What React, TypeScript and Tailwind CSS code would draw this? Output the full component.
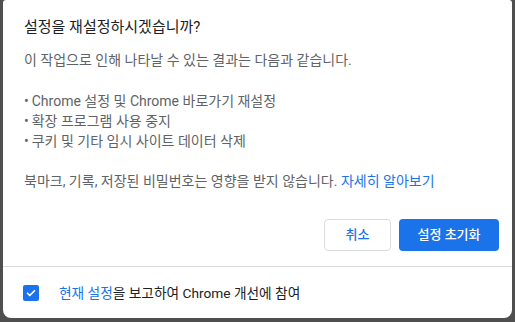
const effects = [
  'Chrome 설정 및 Chrome 바로가기 재설정',
  '확장 프로그램 사용 중지',
  '쿠키 및 기타 임시 사이트 데이터 삭제',
]

export default function App() {
  return (
    <div
      className="w-[515px] h-[322px] bg-[#4f4f4f] pl-[3px] pr-[3px] overflow-hidden"
      style={{ fontFamily: 'Roboto, "Noto Sans CJK KR", "Noto Sans", sans-serif' }}
    >
      <div className="h-[318px] bg-white rounded-t-[3px] rounded-b-lg flex flex-col">
        <div className="pl-[21px] pr-[13px] pt-[15px] flex flex-col">
          <h1 className="text-[15px] leading-[24px] text-[#202124]">설정을 재설정하시겠습니까?</h1>

          <p className="mt-[11px] text-[14px] leading-[20px] text-[#5f6368]">
            이 작업으로 인해 나타날 수 있는 결과는 다음과 같습니다.
          </p>

          <ul className="mt-[21px] text-[14px] leading-[20px] text-[#5f6368]">
            {effects.map((item) => (
              <li key={item} className="flex gap-[3px]">
                <span>•</span>
                <span>{item}</span>
              </li>
            ))}
          </ul>

          <p className="mt-[20px] text-[14px] leading-[20px] text-[#5f6368]">
            북마크, 기록, 저장된 비밀번호는 영향을 받지 않습니다.{' '}
            <a className="text-[#1a73e8]">자세히 알아보기</a>
          </p>

          <div className="mt-[28px] flex justify-end gap-2">
            <button className="w-[67px] h-[32px] rounded border border-[#dadce0] text-[13px] font-medium text-[#1a73e8] bg-white">
              취소
            </button>
            <button className="w-[100px] h-[32px] rounded bg-[#1a73e8] text-[13px] font-medium text-white">
              설정 초기화
            </button>
          </div>
        </div>

        <div className="mt-[15px] border-t border-[#dadce0] flex-1 flex items-center pl-[20px] gap-[20px]">
          <span className="w-4 h-4 rounded-[2px] bg-[#1a73e8] flex items-center justify-center">
            <svg width="12" height="12" viewBox="0 0 24 24" fill="none" stroke="white" strokeWidth="3.5" strokeLinecap="round" strokeLinejoin="round">
              <path d="M5 12.5l4.5 4.5L19 7.5" />
            </svg>
          </span>
          <span className="text-[13.7px] leading-[20px] text-[#202124]">
            <span className="text-[#1a73e8]">현재 설정</span>을 보고하여 Chrome 개선에 참여
          </span>
        </div>
      </div>
    </div>
  )
}
